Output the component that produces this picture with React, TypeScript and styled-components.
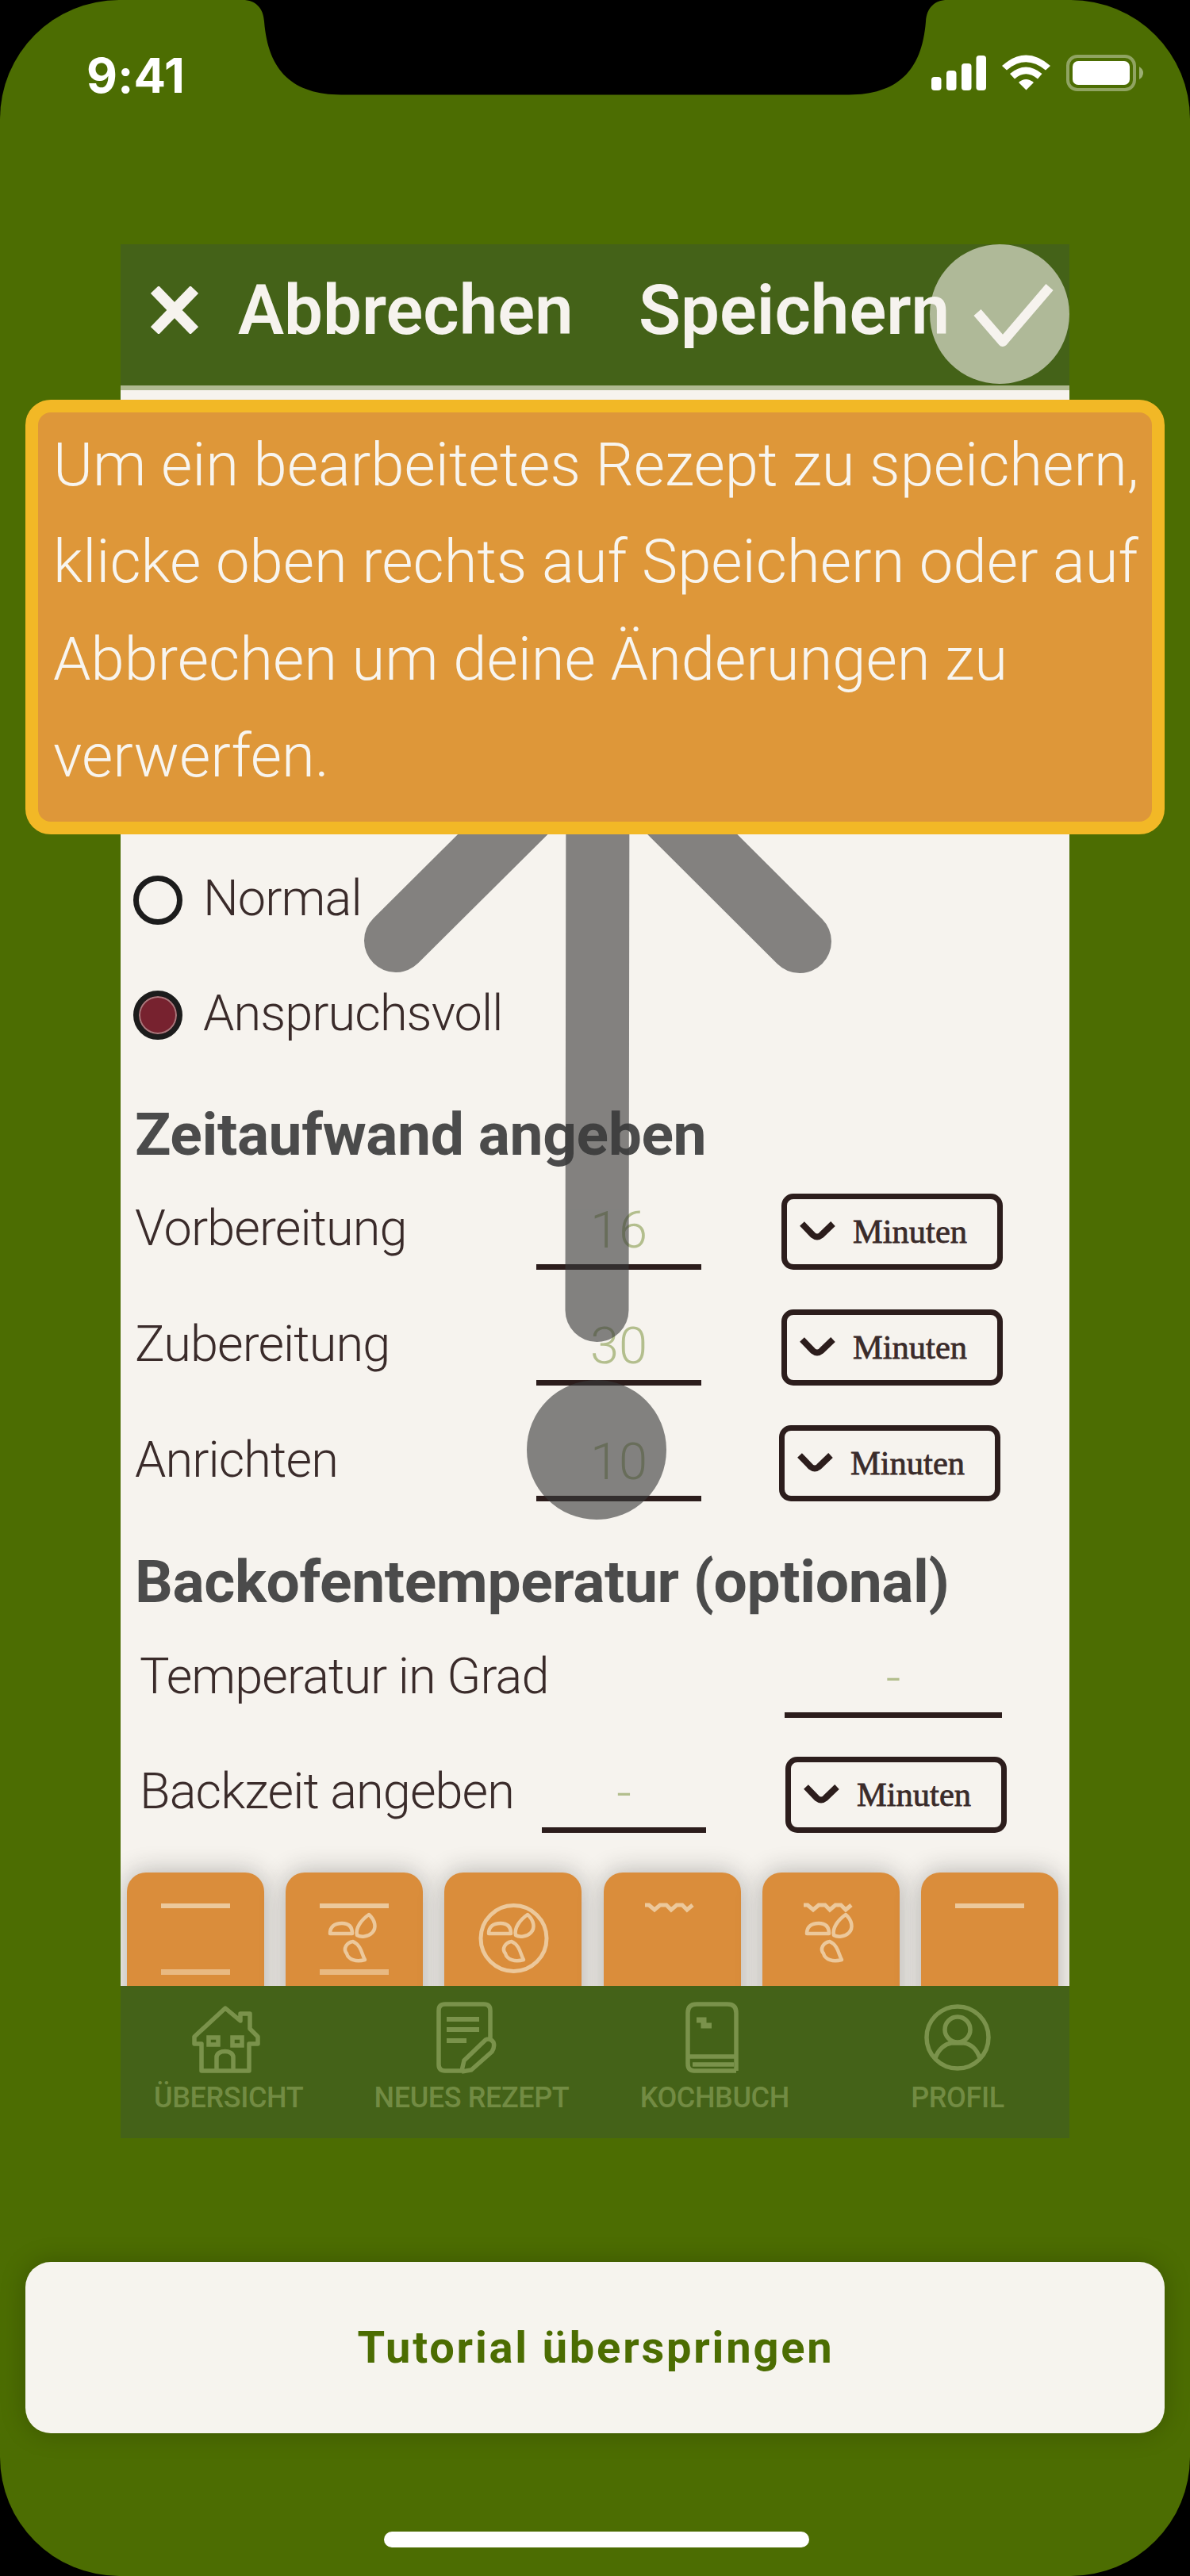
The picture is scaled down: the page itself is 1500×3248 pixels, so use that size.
import React from "react";
import styled, { createGlobalStyle } from "styled-components";

const green = "#4c6d02";
const barGreen = "#446218";
const paper = "#f6f3ee";
const ink = "#3a2b2a";
const line = "#2c1d1c";
const sans = `Roboto, "Noto Sans", sans-serif`;

const GlobalStyle = createGlobalStyle`
  * { box-sizing: border-box; }
  body { margin: 0; background: #000; }
`;

const Screen = styled.main`
  position: relative;
  width: 1500px;
  height: 3248px;
  display: flex;
  flex-direction: column;
  background: ${green};
  border-radius: 150px;
  overflow: hidden;
  font-family: ${sans};
`;

const Notch = styled.svg`
  position: absolute;
  top: 0;
  left: 0;
`;

const StatusBar = styled.header`
  flex: none;
  height: 308px;
  padding: 57px 59px 0 109px;
  display: flex;
  justify-content: space-between;
  align-items: flex-start;
`;

const Clock = styled.span`
  font: 700 60px/76px Inter, sans-serif;
  letter-spacing: 0.2px;
  color: #fff;
`;

const StatusIcons = styled.svg`
  margin-top: 8px;
`;

const Preview = styled.section`
  position: relative;
  flex: none;
  width: 1196px;
  height: 2388px;
  margin-left: 152px;
  display: flex;
  flex-direction: column;
  background: ${paper};
  overflow: hidden;
`;

const ActionBar = styled.div`
  position: relative;
  flex: none;
  height: 184px;
  padding: 0 20px 13px 38px;
  display: flex;
  align-items: center;
  background: ${barGreen};
  border-bottom: 6px solid #afb991;
`;

const ActionLabel = styled.span<{ $gap: number; $width: number }>`
  flex: none;
  width: ${(p) => p.$width}px;
  margin-left: ${(p) => p.$gap}px;
  font-size: 87px;
  font-weight: 600;
  line-height: 104px;
  white-space: nowrap;
  color: ${paper};
`;

const CheckIcon = styled.svg`
  margin: 14px 0 0 auto;
`;

const TapHighlight = styled.div`
  position: absolute;
  top: 0;
  right: 0;
  width: 176px;
  height: 176px;
  border-radius: 50%;
  background: rgba(246, 243, 238, 0.6);
`;

const Form = styled.div`
  flex: none;
  height: 2012px;
  padding-top: 570px;
  display: flex;
  flex-direction: column;
`;

const RadioRow = styled.div`
  flex: none;
  height: 145px;
  padding-left: 16px;
  display: flex;
  align-items: center;
  gap: 26px;
  font-size: 63px;
  font-weight: 300;
  letter-spacing: -0.9px;
  color: ${ink};
`;

const RadioText = styled.span`
  padding-bottom: 4px;
`;

const Radio = styled.i<{ $on?: boolean }>`
  width: 62px;
  height: 62px;
  border: 7px solid #1c1c1c;
  border-radius: 50%;
  background: ${(p) => (p.$on ? "#77222f" : paper)};
  box-shadow: inset 0 0 0 ${(p) => (p.$on ? 2 : 0)}px #a8797d;
`;

const Heading = styled.h2<{ $top: number }>`
  flex: none;
  height: 93px;
  margin: ${(p) => p.$top}px 0 0 18px;
  font-size: 75px;
  font-weight: 700;
  line-height: 92px;
  letter-spacing: -0.4px;
  white-space: nowrap;
  color: #4b4b4b;
`;

const Row = styled.div<{ $height: number; $indent: number; $cols: string }>`
  flex: none;
  height: ${(p) => p.$height}px;
  padding: 0 0 22px ${(p) => p.$indent}px;
  display: grid;
  grid-template-columns: ${(p) => p.$cols};
  align-items: end;
`;

const Label = styled.span`
  font-size: 63px;
  font-weight: 300;
  line-height: 104px;
  letter-spacing: -0.9px;
  white-space: nowrap;
  color: ${ink};
`;

const Field = styled.span`
  height: 102px;
  border-bottom: 7px solid ${line};
  font-size: 65px;
  font-weight: 300;
  line-height: 105px;
  text-align: center;
  color: #b3be8d;
`;

const Select = styled.span<{ $shift?: number }>`
  height: 96px;
  margin-left: ${(p) => p.$shift ?? 0}px;
  margin-right: ${(p) => -(p.$shift ?? 0)}px;
  padding: 0 0 0 16px;
  display: flex;
  align-items: center;
  gap: 22px;
  border: 7px solid ${line};
  border-radius: 15px;
  font: 42.5px/84px "Liberation Serif", serif;
  color: ${ink};
  -webkit-text-stroke: 0.8px ${ink};
`;

const Tiles = styled.div`
  flex: none;
  height: 143px;
  margin-top: 28px;
  padding-left: 8px;
  display: flex;
  gap: 27.2px;
`;

const Tile = styled.div`
  flex: none;
  width: 173px;
  height: 190px;
  border-radius: 24px;
  background: #da8d3b;
  box-shadow: 0 0 32px rgba(30, 30, 30, 0.32);
`;

const Nav = styled.nav`
  position: relative;
  flex: none;
  height: 192px;
  background: ${barGreen};
`;

const NavItems = styled.div`
  margin: 0 -13px 0 -17px;
  padding-top: 18px;
  display: grid;
  grid-template-columns: repeat(4, 306.3px);
`;

const NavItem = styled.div`
  display: flex;
  flex-direction: column;
  align-items: center;
  font-size: 36px;
  font-weight: 500;
  line-height: 44px;
  letter-spacing: -0.4px;
  white-space: nowrap;
  color: #728b43;
`;

const NavLabel = styled.span`
  margin-top: 5px;
`;

const Gesture = styled.svg`
  position: absolute;
  left: 440px;
  top: 1000px;
`;

const Hint = styled.p`
  position: absolute;
  left: 32px;
  top: 504px;
  width: 1436px;
  height: 548px;
  margin: 0;
  padding: 5px 0 0 19px;
  border: 16px solid #f2b826;
  border-radius: 32px;
  background: #de9739;
  font-size: 76px;
  font-weight: 300;
  line-height: 122.4px;
  white-space: pre;
  color: #f8f5ef;
`;

const SkipButton = styled.button`
  flex: none;
  width: 1436px;
  height: 216px;
  margin: 156px 0 0 32px;
  padding: 0;
  border: 0;
  border-radius: 32px;
  background: #f6f4ee;
  box-shadow: 0 0 32px rgba(0, 0, 0, 0.22);
  font: 700 56px/70px ${sans};
  letter-spacing: 2.8px;
  text-indent: 2px;
  color: ${green};
`;

const HomeIndicator = styled.div`
  flex: none;
  width: 536px;
  height: 20px;
  margin: 124px 0 0 484px;
  border-radius: 10px;
  background: #fff;
`;

const Chevron = () => (
  <svg width="45" height="26" viewBox="0 0 45 26" fill="none" stroke={line} strokeWidth="8">
    <path d="M3 3 L17 17.500 Q22 21.500 27 17.500 L42 3" />
  </svg>
);

const Minutes = ({ shift }: { shift?: number }) => (
  <Select $shift={shift}>
    <Chevron />
    Minuten
  </Select>
);

const Blades = () => (
  <g strokeWidth="4.500" strokeLinejoin="round">
    <path d="M57 77 C57 69 62 64 72 64 C81 64 85 69 85 77 Z" />
    <path d="M91 79 C89 70 96 60 106 53 C114 60 116 70 110 76 C105 81 96 82 91 79 Z" />
    <path d="M86 87 C78 88 73 96 78 102 C80 110 90 113 101 110 C97 104 97 92 86 87 Z" />
  </g>
);

const wave = "M53 41 H58 L65 47 L72 41 H80 L86 47 L93 41 H100 L106 47 L113 41";

const heatModes = [
  { top: "line", bottom: true },
  { top: "line", bottom: true, fan: true },
  { top: "ring", fan: true },
  { top: "wave" },
  { top: "wave", fan: true },
  { top: "line" },
];

const App = () => (
  <>
    <GlobalStyle />
    <Screen>
      <Notch width="1500" height="121" viewBox="0 0 1500 121">
        <path d="M306 0 C322 0 332 10 333 27 C338 91 370 119 430 119.500 H1070 C1130 119 1162 91 1167 27 C1168 10 1178 0 1194 0 Z" />
      </Notch>
      <StatusBar>
        <Clock>9:41</Clock>
        <StatusIcons width="270" height="52" viewBox="1171 65 270 52" fill="#fff">
          <rect x="1174" y="97" width="12.500" height="17" rx="4" />
          <rect x="1193" y="89" width="12.500" height="25" rx="4" />
          <rect x="1212" y="80" width="12.500" height="34" rx="4" />
          <rect x="1230.500" y="70" width="12.500" height="44" rx="4" />
          <path d="M1263 83 Q1293 56 1324 83 L1318 88.500 Q1293 68 1269 88.500 Z" />
          <path d="M1273 93 Q1293 76 1313.500 93 L1308 99.500 Q1293 87 1279 99.500 Z" />
          <path d="M1284 104 Q1293 96 1303 104 L1293.500 113.500 Z" />
          <rect x="1346" y="71" width="84" height="42" rx="12" fill="none" stroke="#fff" strokeWidth="4" opacity=".38" />
          <rect x="1352" y="77" width="72" height="30" rx="7" />
          <path d="M1436 84 Q1441 87 1441 92 Q1441 97 1436 100 Z" opacity=".45" />
        </StatusIcons>
      </StatusBar>

      <Preview>
        <ActionBar>
          <svg width="60" height="60" viewBox="0 0 60 60" stroke={paper} strokeWidth="14">
            <path d="M5 4 L55 56 M55 4 L5 56" />
          </svg>
          <ActionLabel $gap={50} $width={440}>Abbrechen</ActionLabel>
          <ActionLabel $gap={65} $width={390}>Speichern</ActionLabel>
          <CheckIcon width="101" height="82" viewBox="0 0 101 82" fill="none" stroke={paper} strokeWidth="12">
            <path d="M5 37 L37 74 L96 5" strokeLinejoin="round" />
          </CheckIcon>
          <TapHighlight />
        </ActionBar>

        <Form>
          <RadioRow>
            <Radio />
            <RadioText>Normal</RadioText>
          </RadioRow>
          <RadioRow>
            <Radio $on />
            <RadioText>Anspruchsvoll</RadioText>
          </RadioRow>

          <Heading $top={32}>Zeitaufwand angeben</Heading>
          <Row $height={146} $indent={18} $cols="506px 208px 101px 279px">
            <Label>Vorbereitung</Label>
            <Field>16</Field>
            <i />
            <Minutes />
          </Row>
          <Row $height={146} $indent={18} $cols="506px 208px 101px 279px">
            <Label>Zubereitung</Label>
            <Field>30</Field>
            <i />
            <Minutes />
          </Row>
          <Row $height={146} $indent={18} $cols="506px 208px 101px 279px">
            <Label>Anrichten</Label>
            <Field>10</Field>
            <i />
            <Minutes shift={-3} />
          </Row>

          <Heading $top={33}>Backofentemperatur (optional)</Heading>
          <Row $height={147} $indent={24} $cols="813px 274px">
            <Label>Temperatur in Grad</Label>
            <Field>-</Field>
          </Row>
          <Row $height={145} $indent={24} $cols="507px 207px 100px 279px">
            <Label>Backzeit angeben</Label>
            <Field>-</Field>
            <i />
            <Minutes />
          </Row>

          <Tiles>
            {heatModes.map((m, i) => (
              <Tile key={i}>
                <svg width="173" height="143" viewBox="1 0 173 143" fill="none" stroke="#ecc89b" strokeWidth="5">
                  {m.top === "line" && <path d="M44 42 H131" strokeWidth="6" />}
                  {m.top === "ring" && <circle cx="88.500" cy="83" r="41.500" />}
                  {m.top === "wave" && <path d={wave} />}
                  {m.bottom && <path d="M44 125.500 H131" strokeWidth="7" opacity=".75" />}
                  {m.fan && <Blades />}
                </svg>
              </Tile>
            ))}
          </Tiles>
        </Form>

        <Nav>
          <NavItems>
            <NavItem>
              <svg width="96" height="96" viewBox="2 0 96 96" fill="none" stroke="#7a924b" strokeWidth="5.500">
                <path d="M46 10 L7 46 V55 H16 V89 H76 V55 H87 V46 L77 36 V17 H65 V26 Z" strokeLinejoin="round" />
                <path d="M35 89 V72 C35 62 56 62 56 72 V89 M25 47 H37 V56 H25 Z M55 47 H67 V57 H55 Z" />
              </svg>
              <NavLabel>ÜBERSICHT</NavLabel>
            </NavItem>
            <NavItem>
              <svg width="96" height="96" viewBox="0 0 96 96" fill="none" stroke="#7a924b" strokeWidth="5.500">
                <path d="M72 50 V13 Q72 5 64 5 H15 Q7 5 7 13 V81 Q7 89 15 89 H36 L39 76 L66 50 Q72 47 76 53 Q78 59 74 65 L48 88 L36 90" />
                <path d="M17 24 H58 M17 37 H58 M17 51 H42" strokeWidth="6" />
              </svg>
              <NavLabel>NEUES REZEPT</NavLabel>
            </NavItem>
            <NavItem>
              <svg width="96" height="96" viewBox="0 0 96 96" fill="none" stroke="#7a924b" strokeWidth="5.500">
                <path d="M75 89 H22 Q14 89 14 80 V16 Q14 5 25 5 H64 Q75 5 75 16 V89 M15 71 H75 M20 81 H72" />
                <path d="M25 25 H34 V32 H44" strokeWidth="7" />
              </svg>
              <NavLabel>KOCHBUCH</NavLabel>
            </NavItem>
            <NavItem>
              <svg width="96" height="96" viewBox="0 0 96 96" fill="none" stroke="#7a924b" strokeWidth="5.500">
                <circle cx="48" cy="47" r="39" />
                <circle cx="48" cy="37" r="16" />
                <path d="M20 73 C24 61 33 55 40 54 H56 C64 55 72 61 76 73" />
              </svg>
              <NavLabel>PROFIL</NavLabel>
            </NavItem>
          </NavItems>
        </Nav>
      </Preview>

      <Gesture width="620" height="930" viewBox="440 1000 620 930">
        <g opacity=".61" stroke="#393a3a" strokeWidth="80" strokeLinecap="round" fill="none">
          <path d="M752.500 1652 L753.500 933 M499 1186 L753.500 933 L1008 1187" />
          <circle cx="752" cy="1828" r="88" fill="#393a3a" stroke="none" />
        </g>
      </Gesture>
      <Hint>
        {"Um ein bearbeitetes Rezept zu speichern,\nklicke oben rechts auf Speichern oder auf\nAbbrechen um deine Änderungen zu\nverwerfen."}
      </Hint>

      <SkipButton>Tutorial überspringen</SkipButton>
      <HomeIndicator />
    </Screen>
  </>
);

export default App;
